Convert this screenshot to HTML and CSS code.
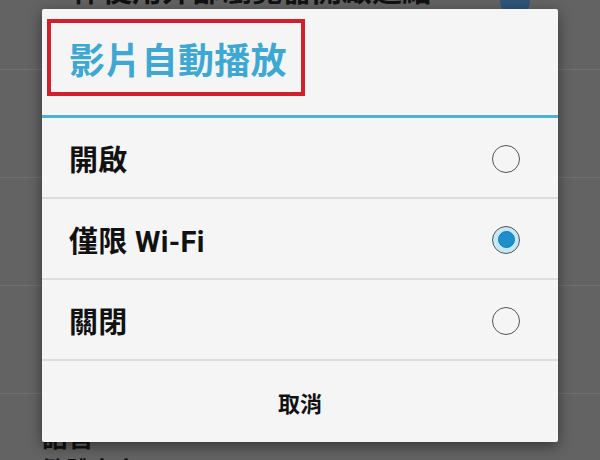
FILE: index.html
```html
<!DOCTYPE html>
<html lang="zh-Hant">
<head>
<meta charset="utf-8">
<link rel="stylesheet" href="styles.css">
</head>
<body>
<div class="screen">
  <div class="list">
    <div class="item item-first">
      <span class="item-title">一律使用外部瀏覽器開啟連結</span>
      <span class="toggle"></span>
    </div>
    <div class="item"></div>
    <div class="item"></div>
    <div class="item"></div>
    <div class="item item-lang">
      <span class="item-title lang">語言</span>
      <span class="item-sub">繁體中文</span>
    </div>
  </div>

  <div class="dialog">
    <div class="dialog-head">
      <div class="title-box"><span class="title">影片自動播放</span></div>
    </div>
    <div class="accent"></div>
    <div class="option">
      <span class="label">開啟</span>
      <span class="radio"></span>
    </div>
    <div class="option">
      <span class="label">僅限 Wi-Fi</span>
      <span class="radio checked"><span class="dot"></span></span>
    </div>
    <div class="option">
      <span class="label">關閉</span>
      <span class="radio"></span>
    </div>
    <div class="cancel">取消</div>
  </div>
</div>
</body>
</html>
```

FILE: styles.css
```css
* { box-sizing: border-box; margin: 0; padding: 0; }
html, body {
  width: 600px;
  height: 460px;
  overflow: hidden;
}
body {
  background: #636363;
  font-family: "Noto Sans CJK TC", "Noto Sans", sans-serif;
}
.screen {
  position: relative;
  width: 600px;
  height: 460px;
  overflow: hidden;
}
.list {
  display: flex;
  flex-direction: column;
  margin-top: -38px;
}
.item {
  height: 108px;
  border-bottom: 1px solid #6e6e6e;
  display: flex;
  padding: 0 42px;
}
.item-first {
  align-items: flex-start;
  padding-top: 2px;
  justify-content: space-between;
}
.item-title {
  font-size: 30px;
  font-weight: 700;
  color: #111;
  line-height: 48px;
}
.toggle {
  width: 30px;
  height: 30px;
  border-radius: 50%;
  background: #2f5579;
  margin-top: 22px;
  margin-right: 28px;
}
.item-lang {
  flex-direction: column;
  align-items: flex-start;
  height: 120px;
  padding-top: 25px;
  border-bottom: none;
}
.lang {
  font-size: 26px;
  line-height: 34px;
}
.item-sub {
  font-size: 24px;
  font-weight: 700;
  color: #111;
  line-height: 32px;
}

.dialog {
  position: absolute;
  left: 42px;
  top: 9px;
  width: 516px;
  height: 433px;
  background: #f5f5f5;
  border-radius: 2px;
  box-shadow: 0 4px 14px rgba(0, 0, 0, 0.45);
  display: flex;
  flex-direction: column;
}
.dialog-head {
  height: 106px;
  padding: 10px 0 0 5px;
}
.title-box {
  width: 258px;
  height: 77px;
  border: 4px solid #d11f2b;
  display: flex;
  align-items: center;
  padding-left: 18px;
}
.title {
  font-size: 36px;
  font-weight: 700;
  color: #3ea8d3;
  letter-spacing: 0.3px;
  line-height: 1;
}
.accent {
  height: 3px;
  background: #4db2d5;
}
.option {
  height: 81px;
  border-bottom: 2px solid #dddddd;
  display: flex;
  align-items: center;
  justify-content: space-between;
  padding: 2px 38px 0 27px;
}
.label {
  font-family: Roboto, "Noto Sans CJK TC", sans-serif;
  font-size: 29px;
  font-weight: 700;
  color: #111;
  line-height: 1;
  margin-top: 5px;
  letter-spacing: 0.3px;
}
.radio {
  width: 28px;
  height: 28px;
  border-radius: 50%;
  border: 1.5px solid #555;
  display: flex;
  align-items: center;
  justify-content: center;
}
.radio.checked {
  background: #c4e8f6;
}
.dot {
  width: 17px;
  height: 17px;
  border-radius: 50%;
  background: #1d8fcc;
  border: 1px solid #177cb2;
}
.cancel {
  flex: 1;
  display: flex;
  align-items: center;
  justify-content: center;
  font-size: 22px;
  font-weight: 700;
  color: #111;
}
```
